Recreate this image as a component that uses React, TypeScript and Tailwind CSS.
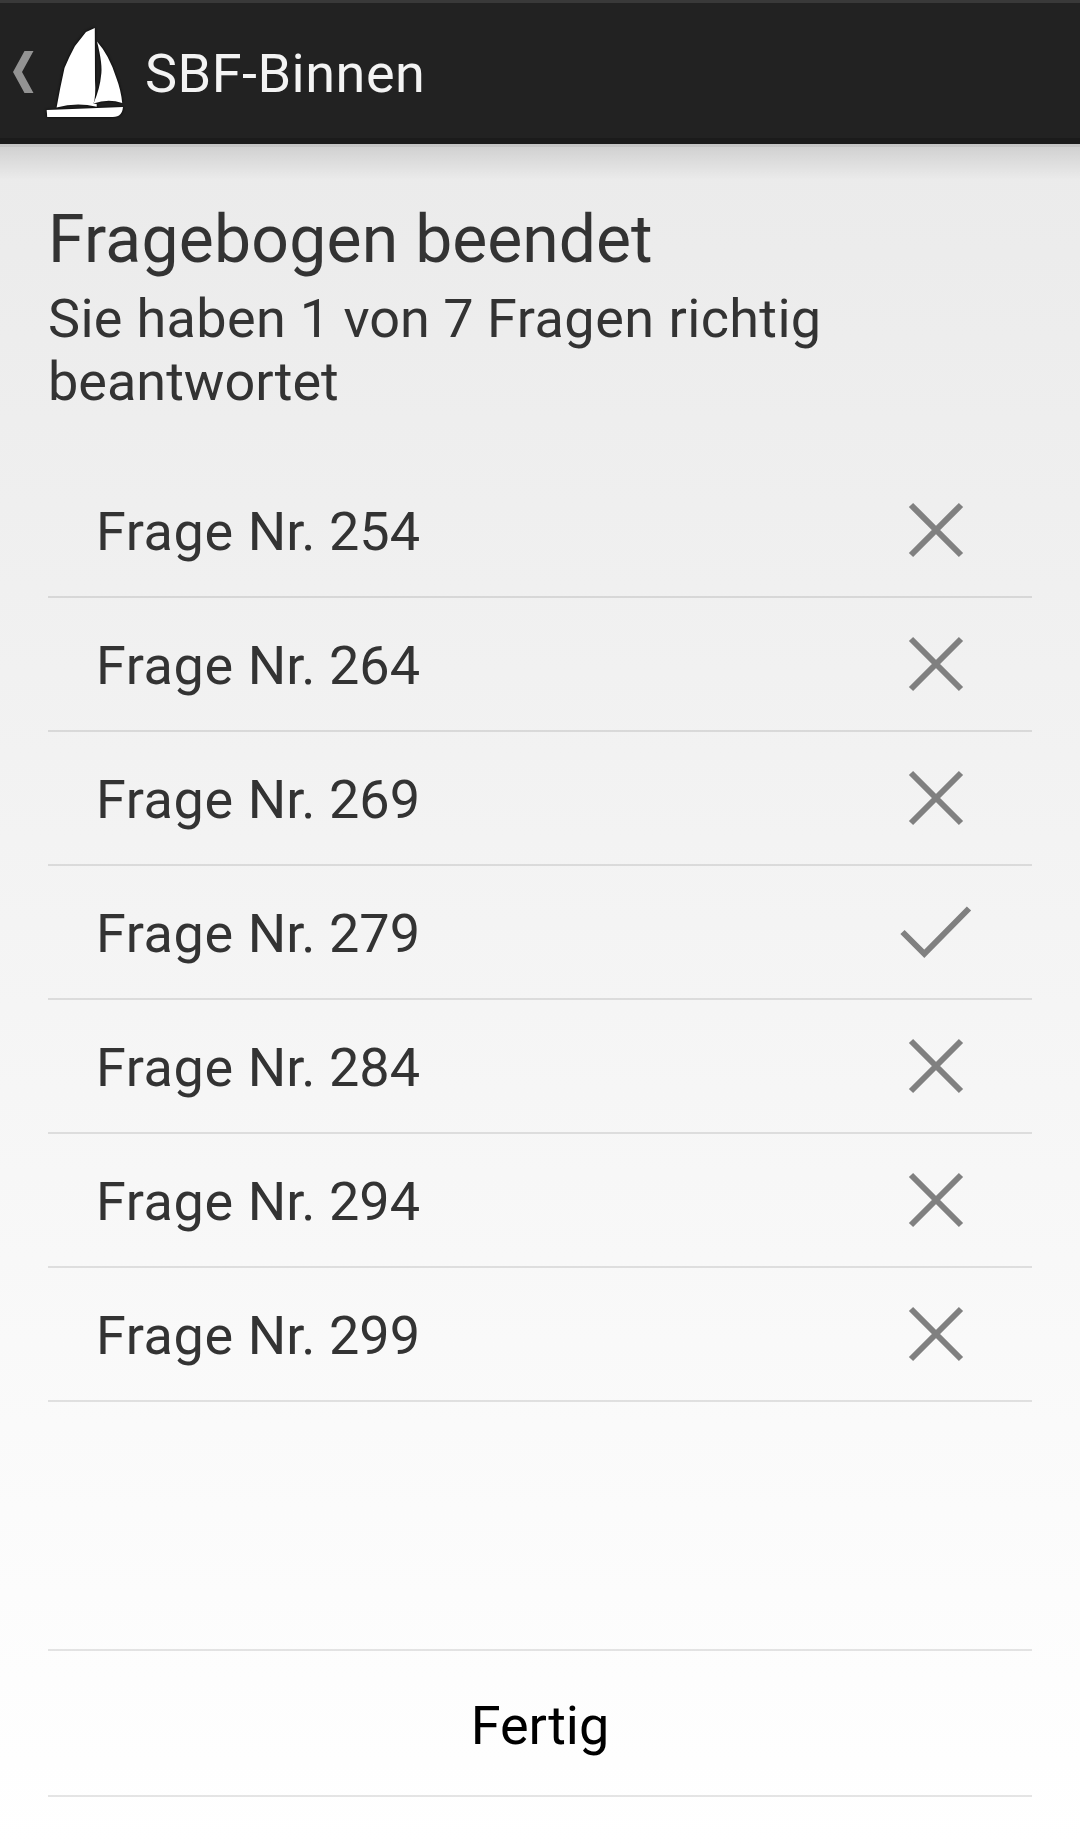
const questions = [
  { nr: 254, correct: false },
  { nr: 264, correct: false },
  { nr: 269, correct: false },
  { nr: 279, correct: true },
  { nr: 284, correct: false },
  { nr: 294, correct: false },
  { nr: 299, correct: false },
];

function Sailboat() {
  return (
    <svg width="90" height="100" viewBox="0 0 90 100" className="block shrink-0 overflow-visible drop-shadow-[0_0_1.5px_#000]" fill="#fff">
      <path d="M54.8 8 L46 12 L35 26 Q29 37 24.500 48 Q20 68 16.600 87.600 Q36 82 56.700 86.700 L56.700 84 L53.500 83.500 Q56 77 55 60 Z" />
      <path d="M57 21.500 Q63 45 61 56 Q60 68 53.500 83.600 Q68 78 82.200 83 Q81 70 76 57 Q69 35 57 21.500 Z" />
      <path d="M6.700 90 L83 87 Q82.500 93 79 95.500 Q76 97 70 97 L7.200 97 Z" />
    </svg>
  );
}

function ResultIcon({ correct }: { correct: boolean }) {
  return (
    <svg width="96" height="96" viewBox="0 0 96 96" className="block shrink-0" fill="none" stroke="#808080" strokeWidth="6">
      {correct ? (
        <path d="M14.500 48 L36.300 69.800 L81 24.500" />
      ) : (
        <path d="M23 23 L73 73 M73 23 L23 73" />
      )}
    </svg>
  );
}

export default function App() {
  return (
    <div className="flex h-[1845px] w-[1080px] flex-col overflow-hidden bg-[linear-gradient(to_bottom,#e9e9e9,#ffffff)] font-['Roboto',sans-serif] text-[54px] leading-[63px] text-[#333333]">
      <header className="flex h-[144px] shrink-0 items-start border-t-3 border-b-6 border-t-[#393939] border-b-[#1b1b1b] bg-[#222222] text-[#f3f3f3]">
        <svg width="40" height="100" viewBox="0 0 40 100" className="mt-[17px] block shrink-0" fill="#939393">
          <path d="M24.500 31 H33.500 L22 52 L33.500 73 H24.500 L13 52 Z" />
        </svg>
        <div className="mt-[17px] flex">
          <Sailboat />
        </div>
        <h1 className="mt-[39px] ml-[15px] tracking-[0.5px]">SBF-Binnen</h1>
      </header>
      <div className="h-[3px] shrink-0 bg-black/16" />
      <div className="h-[33px] shrink-0 bg-linear-to-b from-black/11 to-transparent" />
      <main className="flex grow flex-col px-12 pb-12">
        <h2 className="mt-[21px] text-[66px] leading-[78px]">
          <span className="tracking-[0.27px]">Fragebogen </span>beendet
        </h2>
        <p className="mt-[8px] w-[860px]">
          <span className="tracking-[0.33px]">Sie haben </span>1 von 7 <span className="tracking-[0.5px]">Fragen </span>
          <span className="tracking-[0.35px]">richtig</span> beantwortet
        </p>
        <ul className="mt-[51px]">
          {questions.map((q) => (
            <li key={q.nr} className="flex h-[134px] items-center justify-between border-b-2 border-black/10 px-12">
              <span className="pt-[3px]">
                <span className="tracking-[0.6px]">Frage </span>Nr. {q.nr}
              </span>
              <ResultIcon correct={q.correct} />
            </li>
          ))}
        </ul>
        <button className="mt-auto h-[148px] border-y-2 border-black/10 pt-1 text-black">Fertig</button>
      </main>
    </div>
  );
}
